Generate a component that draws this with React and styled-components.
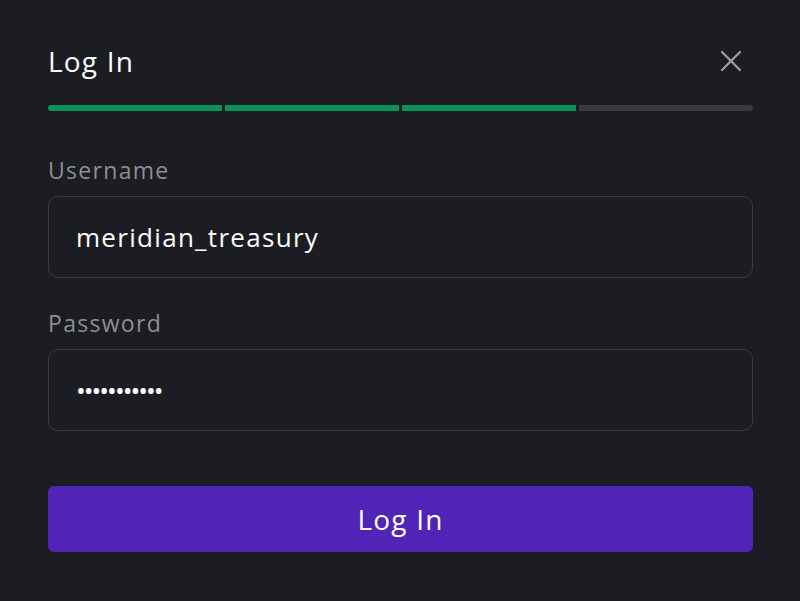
import React from "react";
import styled, { createGlobalStyle } from "styled-components";

const GlobalStyle = createGlobalStyle`
  html, body {
    margin: 0;
    padding: 0;
    background: #1c1d22;
  }
  * {
    box-sizing: border-box;
  }
`;

const Modal = styled.div`
  width: 800px;
  height: 601px;
  background: #1c1d22;
  padding: 39px 47px 0 48px;
  font-family: "Open Sans", "Liberation Sans", sans-serif;
  display: flex;
  flex-direction: column;
`;

const Header = styled.div`
  display: flex;
  align-items: center;
  justify-content: space-between;
  height: 44px;
`;

const Title = styled.h2`
  margin: 0;
  font-size: 28px;
  font-weight: 500;
  color: #ffffff;
  letter-spacing: 1.2px;
`;

const CloseButton = styled.button`
  width: 32px;
  height: 32px;
  margin-right: 6px;
  padding: 0;
  background: none;
  border: none;
  color: #a0a0a3;
  display: flex;
  align-items: center;
  justify-content: center;
  cursor: pointer;
`;

const Progress = styled.div`
  display: flex;
  gap: 3px;
  height: 6px;
  margin-top: 22px;
  border-radius: 3px;
  overflow: hidden;
`;

const Step = styled.div`
  flex: 1;
  background: ${({ $done }) => ($done ? "#0a9356" : "#393a40")};
`;

const Field = styled.div`
  display: flex;
  flex-direction: column;
  margin-top: ${({ $first }) => ($first ? "42px" : "28px")};
`;

const Label = styled.label`
  font-size: 23px;
  color: #8e8e93;
  line-height: 34px;
  letter-spacing: 1.3px;
  margin-bottom: 9px;
`;

const Input = styled.input`
  height: 82px;
  width: 100%;
  background: #1c1d22;
  border: 1px solid #393a40;
  border-radius: 10px;
  padding: 0 27px;
  color: #ffffff;
  font-family: inherit;
  font-size: 26px;
  letter-spacing: ${({ type }) => (type === "password" ? "-2px" : "1.3px")};
  outline: none;
`;

const SubmitButton = styled.button`
  margin-top: 55px;
  height: 66px;
  width: 100%;
  background: #5124b8;
  border: none;
  border-radius: 6px;
  color: #ffffff;
  font-family: inherit;
  font-size: 28px;
  font-weight: 500;
  letter-spacing: 1.2px;
  cursor: pointer;
`;

const CloseIcon = () => (
  <svg width="22" height="22" viewBox="0 0 22 22" fill="none">
    <path
      d="M2 2L20 20M20 2L2 20"
      stroke="currentColor"
      strokeWidth="2.2"
      strokeLinecap="round"
    />
  </svg>
);

export default function App() {
  const steps = [true, true, true, false];
  return (
    <>
      <GlobalStyle />
      <Modal>
        <Header>
          <Title>Log In</Title>
          <CloseButton aria-label="Close">
            <CloseIcon />
          </CloseButton>
        </Header>
        <Progress>
          {steps.map((done, i) => (
            <Step key={i} $done={done} />
          ))}
        </Progress>
        <Field $first>
          <Label>Username</Label>
          <Input type="text" defaultValue="meridian_treasury" />
        </Field>
        <Field>
          <Label>Password</Label>
          <Input type="password" defaultValue="password123" />
        </Field>
        <SubmitButton>Log In</SubmitButton>
      </Modal>
    </>
  );
}
